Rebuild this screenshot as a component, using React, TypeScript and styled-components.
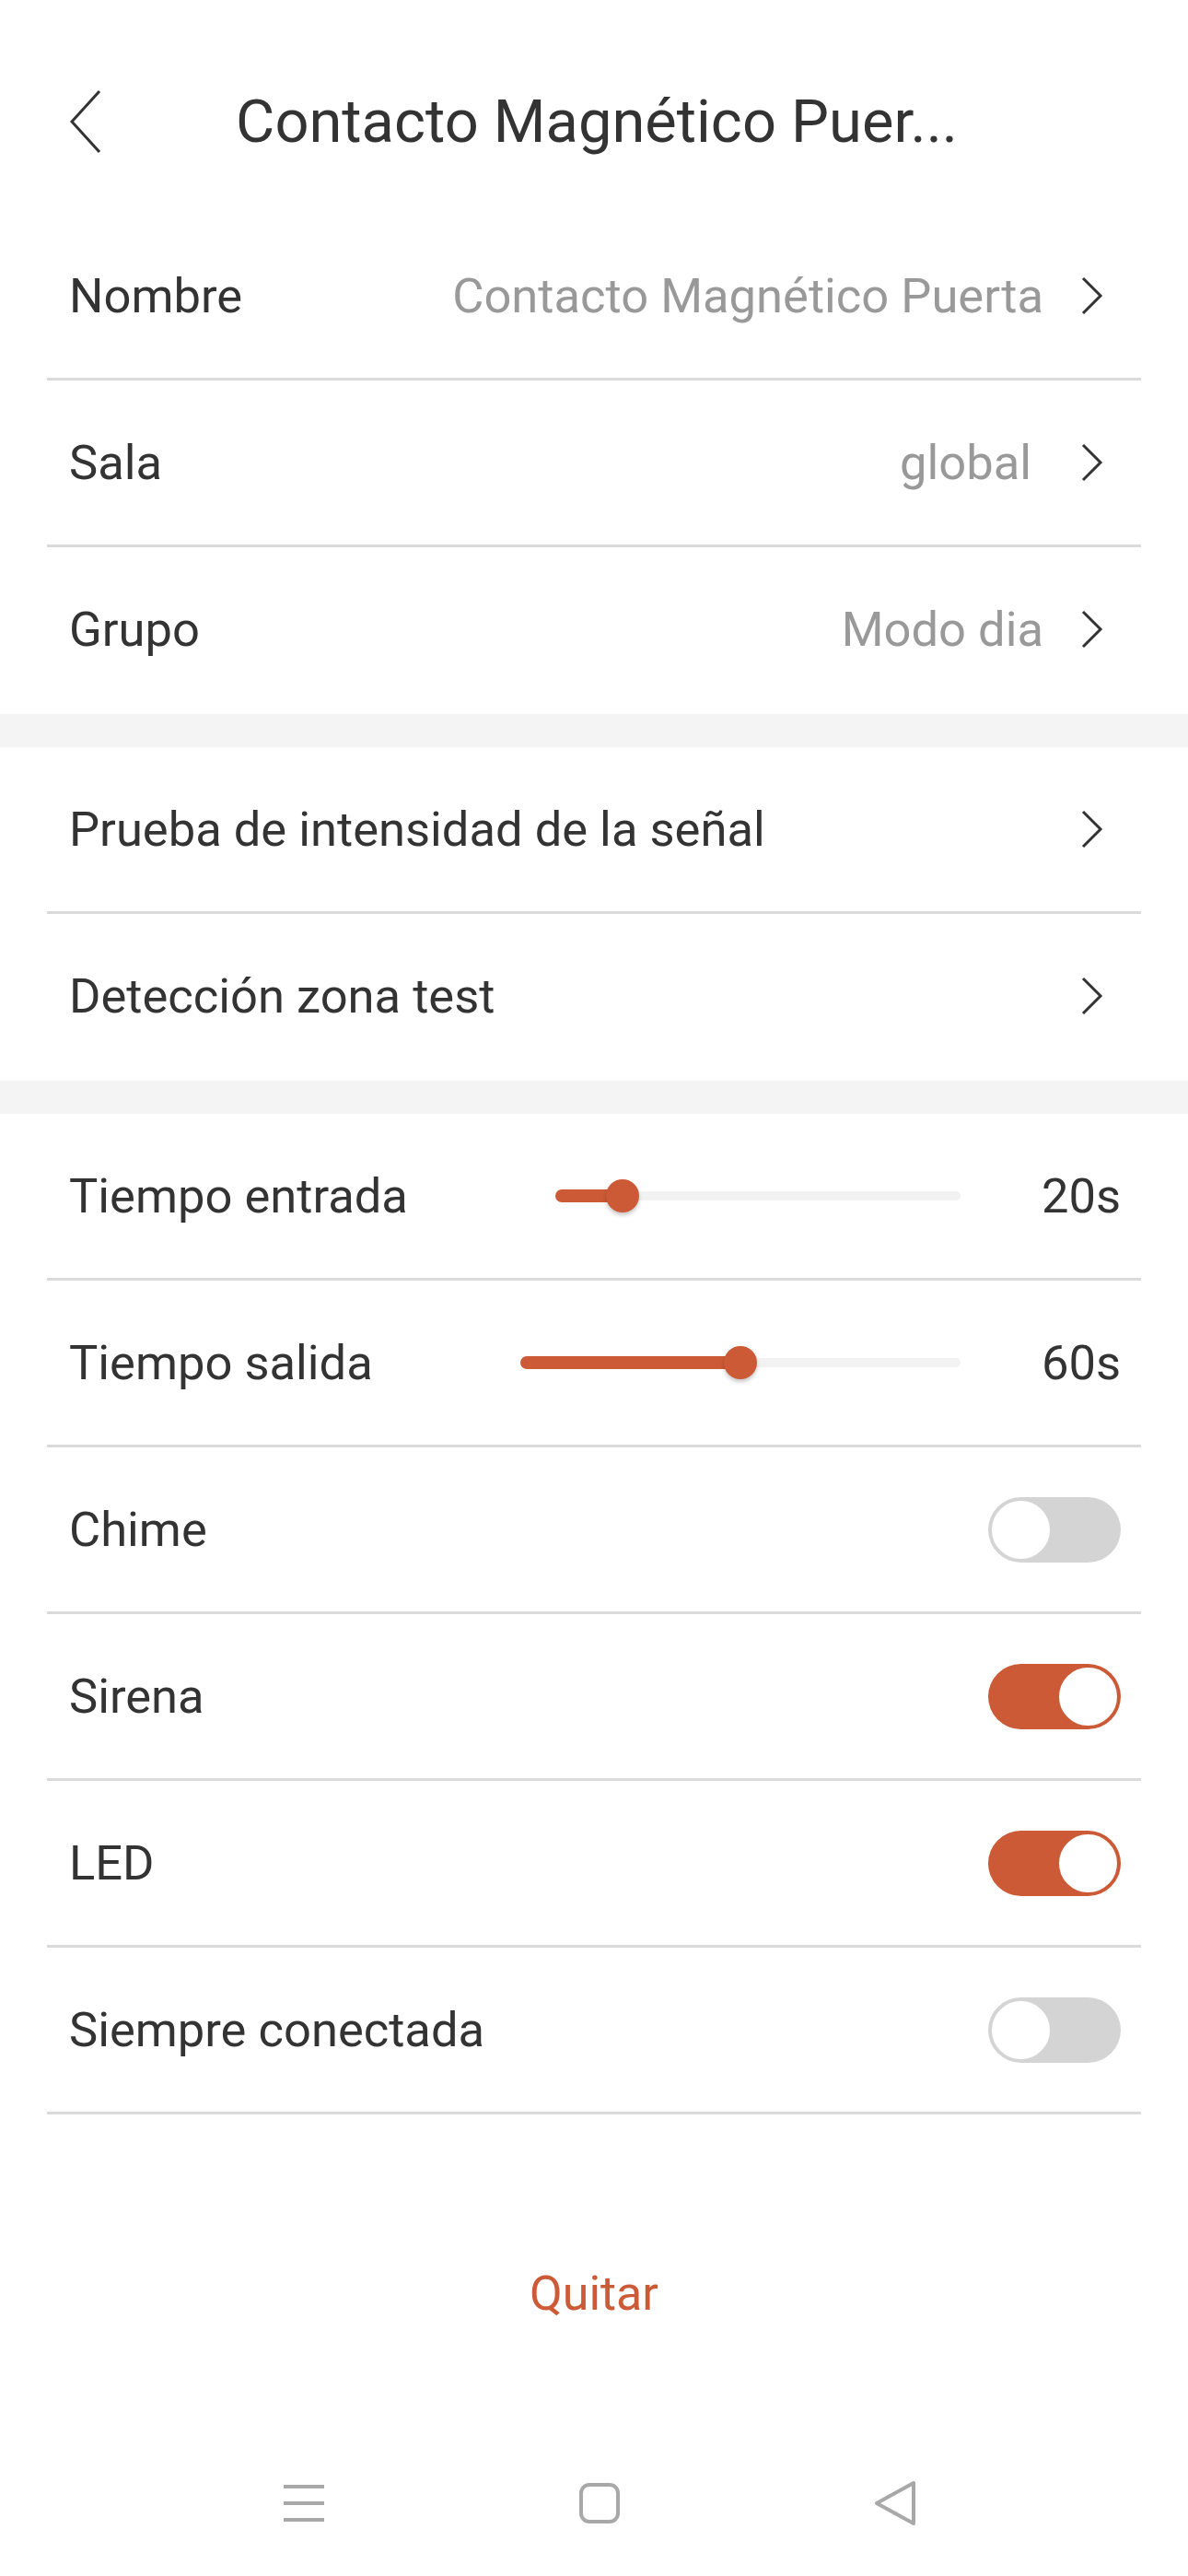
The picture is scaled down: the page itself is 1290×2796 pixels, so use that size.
import { FC } from 'react';
import styled, { createGlobalStyle } from 'styled-components';

const ORANGE = '#cc5a36';

const GlobalStyle = createGlobalStyle`
  html, body {
    margin: 0;
    padding: 0;
    background: #ffffff;
  }
  body {
    font-family: Roboto, 'Liberation Sans', Arial, sans-serif;
    color: #333333;
  }
`;

interface SliderRowProps {
  label: string;
  value: number; // seconds
  max: number;
}

interface ToggleRowProps {
  label: string;
  on: boolean;
  last?: boolean;
}

const BackIcon: FC = () => (
  <svg width="34" height="70" viewBox="0 0 34 70">
    <polyline points="32,2 2,35 32,68" fill="none" stroke="#333" strokeWidth="3" />
  </svg>
);

const Chevron: FC = () => (
  <ChevronSvg width="24" height="42" viewBox="0 0 24 42">
    <polyline points="2,2 21,21 2,40" fill="none" stroke="#333" strokeWidth="3" />
  </ChevronSvg>
);

const LinkRow: FC<{ label: string; value?: string; last?: boolean }> = ({ label, value, last }) => (
  <Row $last={last}>
    <Label>{label}</Label>
    {value && <Value>{value}</Value>}
    <Chevron />
  </Row>
);

const SliderRow: FC<SliderRowProps> = ({ label, value, max }) => {
  const pct = (value / max) * 100;
  return (
    <Row>
      <Label>{label}</Label>
      <Slider>
        <Track />
        <Fill style={{ width: `${pct}%` }} />
        <Thumb style={{ left: `${pct}%` }} />
      </Slider>
      <Amount>{value}s</Amount>
    </Row>
  );
};

const ToggleRow: FC<ToggleRowProps> = ({ label, on, last }) => (
  <Row $last={last}>
    <Label>{label}</Label>
    <Toggle $on={on}>
      <Knob $on={on} />
    </Toggle>
  </Row>
);

export default function App() {
  return (
    <>
      <GlobalStyle />
      <Page>
        <Header>
          <BackButton>
            <BackIcon />
          </BackButton>
          <Title>Contacto Magnético Puer...</Title>
          <span />
        </Header>

        <Group>
          <LinkRow label="Nombre" value="Contacto Magnético Puerta" />
          <LinkRow label="Sala" value="global " />
          <LinkRow label="Grupo" value="Modo dia" last />
        </Group>
        <Gap />
        <Group>
          <LinkRow label="Prueba de intensidad de la señal" />
          <LinkRow label="Detección zona test" last />
        </Group>
        <Gap />
        <Group>
          <SliderRow label="Tiempo entrada" value={20} max={120} />
          <SliderRow label="Tiempo salida" value={60} max={120} />
          <ToggleRow label="Chime" on={false} />
          <ToggleRow label="Sirena" on />
          <ToggleRow label="LED" on />
          <ToggleRow label="Siempre conectada" on={false} />
        </Group>

        <RemoveButton>Quitar</RemoveButton>
        <Spacer />

        <NavBar>
          <NavItem>
            <svg width="46" height="42" viewBox="0 0 46 42">
              <rect x="1" y="1" width="44" height="4" fill="#a8a8a8" />
              <rect x="1" y="19" width="44" height="4" fill="#a8a8a8" />
              <rect x="1" y="37" width="44" height="4" fill="#a8a8a8" />
            </svg>
          </NavItem>
          <NavItem>
            <svg width="46" height="46" viewBox="0 0 46 46">
              <rect x="3" y="3" width="40" height="40" rx="9" fill="none" stroke="#a8a8a8" strokeWidth="4" />
            </svg>
          </NavItem>
          <NavItem>
            <svg width="48" height="50" viewBox="0 0 48 50">
              <path d="M44 3 L44 47 L4 25 Z" fill="none" stroke="#a8a8a8" strokeWidth="4" strokeLinejoin="round" />
            </svg>
          </NavItem>
        </NavBar>
      </Page>
    </>
  );
}

const Page = styled.div`
  width: 1290px;
  height: 2796px;
  display: flex;
  flex-direction: column;
  background: #ffffff;
  overflow: hidden;
`;

const Header = styled.header`
  height: 232px;
  box-sizing: border-box;
  padding-top: 32px;
  display: grid;
  grid-template-columns: 1fr auto 1fr;
  align-items: center;
`;

const BackButton = styled.div`
  padding-left: 76px;
  display: flex;
  align-items: center;
`;

const Title = styled.h1`
  margin: 0;
  font-size: 65px;
  font-weight: 400;
  line-height: 1.2;
  color: #333333;
  white-space: nowrap;
  padding-left: 6px;
`;

const Group = styled.section`
  display: flex;
  flex-direction: column;
`;

const Gap = styled.div`
  height: 36px;
  background: #f4f4f4;
`;

const Row = styled.div<{ $last?: boolean }>`
  height: 181px;
  box-sizing: border-box;
  margin: 0 51px;
  padding: 0 22px 0 24px;
  display: flex;
  align-items: center;
  border-bottom: 3px solid ${({ $last }) => ($last ? 'transparent' : '#dadada')};
`;

const Label = styled.span`
  font-size: 52.5px;
  line-height: 1.2;
  color: #333333;
  white-space: nowrap;
  margin-right: auto;
`;

const Value = styled.span`
  font-size: 52.5px;
  line-height: 1.2;
  color: #999999;
  white-space: pre;
  margin-right: 41px;
`;

const ChevronSvg = styled.svg`
  margin-right: 19px;
  flex-shrink: 0;
`;

const Slider = styled.div`
  position: relative;
  flex: 1;
  height: 40px;
  margin: 0 87px 0 160px;
`;

const Track = styled.div`
  position: absolute;
  left: 0;
  right: 0;
  top: 15px;
  height: 10px;
  border-radius: 5px;
  background: #f2f2f2;
`;

const Fill = styled.div`
  position: absolute;
  left: 0;
  top: 13px;
  height: 14px;
  border-radius: 7px;
  background: ${ORANGE};
`;

const Thumb = styled.div`
  position: absolute;
  top: 2px;
  width: 36px;
  height: 36px;
  margin-left: -18px;
  border-radius: 50%;
  background: ${ORANGE};
  box-shadow: 0 3px 4px rgba(0, 0, 0, 0.22);
`;

const Amount = styled.span`
  font-size: 52.5px;
  line-height: 1.2;
  color: #333333;
  width: 87px;
  text-align: right;
`;

const Toggle = styled.div<{ $on: boolean }>`
  width: 144px;
  height: 71px;
  box-sizing: border-box;
  padding: 2px;
  border-radius: 36px;
  display: flex;
  justify-content: ${({ $on }) => ($on ? 'flex-end' : 'flex-start')};
  align-items: center;
  background: ${({ $on }) => ($on ? ORANGE : '#d4d4d4')};
`;

const Knob = styled.div<{ $on: boolean }>`
  width: 67px;
  height: 67px;
  box-sizing: border-box;
  border-radius: 50%;
  background: #ffffff;
  border: 2px solid ${({ $on }) => ($on ? ORANGE : '#d4d4d4')};
`;

const RemoveButton = styled.div`
  margin-top: 165px;
  text-align: center;
  font-size: 52px;
  line-height: 60px;
  color: ${ORANGE};
`;

const Spacer = styled.div`
  flex: 1;
`;

const NavBar = styled.nav`
  height: 158px;
  display: flex;
  justify-content: center;
  align-items: center;
  padding-left: 12px;
`;

const NavItem = styled.div`
  width: 321px;
  display: flex;
  justify-content: center;
  align-items: center;
`;
